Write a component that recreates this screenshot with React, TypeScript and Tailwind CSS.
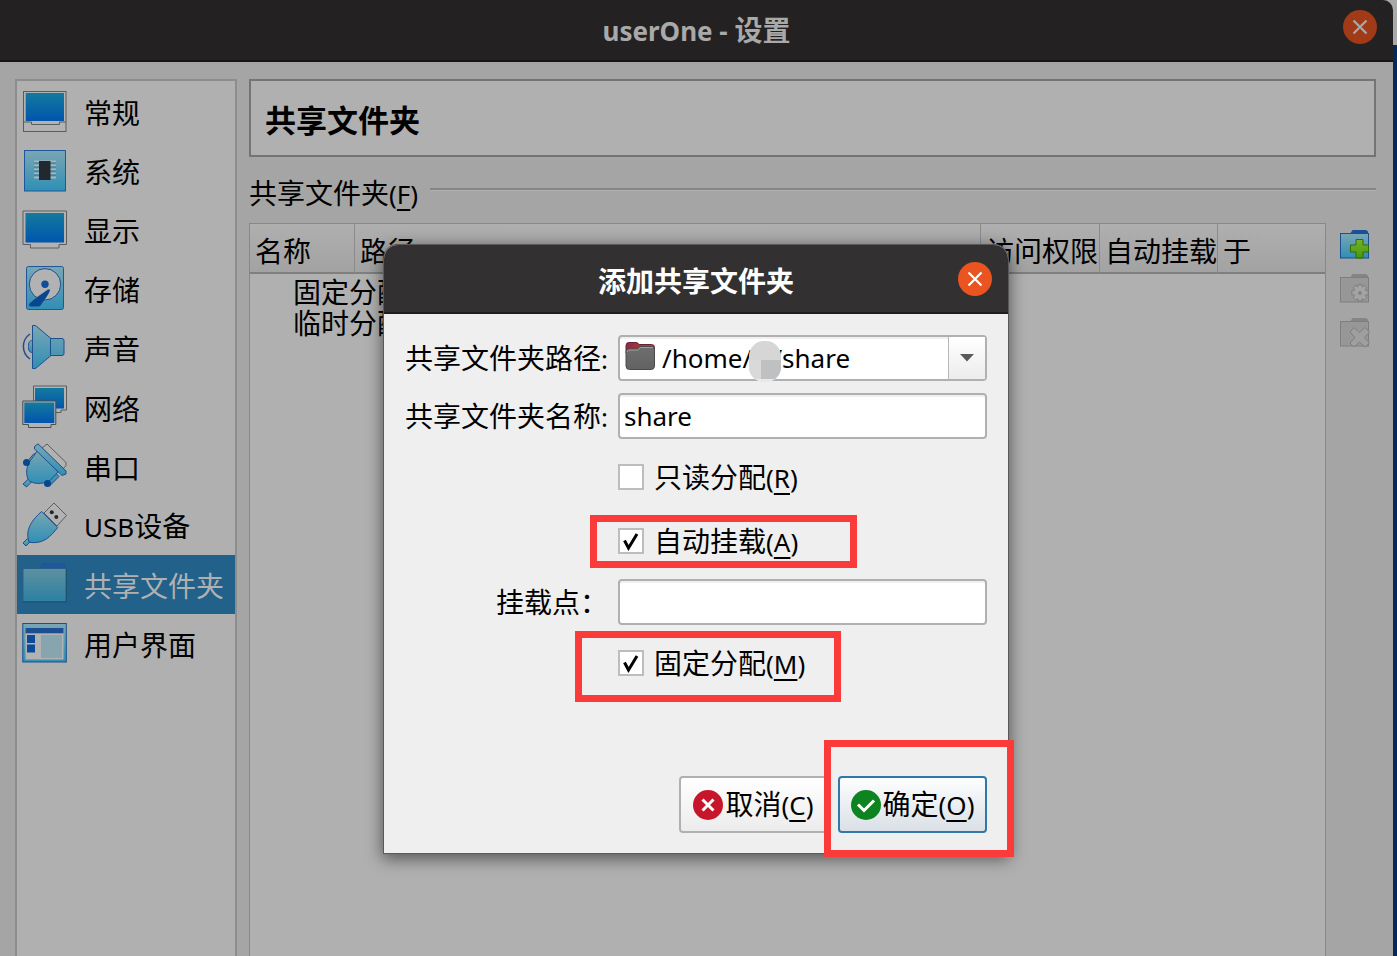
import React from 'react';

const LINE = '#1c4f8e';

function Gradients() {
  return (
    <svg width="0" height="0" className="absolute" aria-hidden="true">
      <defs>
        <linearGradient id="screen" x1="0" y1="0" x2="0" y2="1">
          <stop offset="0" stopColor="#147a9e" />
          <stop offset="1" stopColor="#0055ad" />
        </linearGradient>
        <linearGradient id="sky" x1="0" y1="0" x2="0" y2="1">
          <stop offset="0" stopColor="#7aa6b4" />
          <stop offset="1" stopColor="#2f8fb5" />
        </linearGradient>
        <linearGradient id="folder" x1="0" y1="0" x2="0" y2="1">
          <stop offset="0" stopColor="#5f919f" />
          <stop offset="1" stopColor="#2b80a3" />
        </linearGradient>
        <linearGradient id="plus" x1="0" y1="0" x2="0" y2="1">
          <stop offset="0" stopColor="#7bb02c" />
          <stop offset="1" stopColor="#469808" />
        </linearGradient>
        <linearGradient id="homeTab" x1="0" y1="0" x2="1" y2="0">
          <stop offset="0" stopColor="#8b2a4c" />
          <stop offset="1" stopColor="#c0401f" />
        </linearGradient>
        <linearGradient id="homeBody" x1="0" y1="0" x2="0" y2="1">
          <stop offset="0" stopColor="#6f6f6f" />
          <stop offset="1" stopColor="#626262" />
        </linearGradient>
      </defs>
    </svg>
  );
}

const icons: Record<string, React.ReactNode> = {
  general: (
    <>
      <rect x="1.500" y="3.500" width="42.500" height="40" fill="#b2b2b2" stroke="#5c5c5c" />
      <rect x="3.700" y="5" width="38.300" height="28" fill="url(#screen)" />
      <path d="M2 34h7.500v2.500h28V34H44" fill="none" stroke="#5c5c5c" />
    </>
  ),
  system: (
    <>
      <rect x="2.500" y="3.500" width="41" height="40.500" fill="url(#sky)" stroke="#20579c" />
      <path d="M12 14.500h22M12 18.500h22M12 22.500h22M12 26.500h22M12 30.500h22" stroke="#a9b6ba" strokeWidth="2" />
      <path d="M12 16h22M12 20h22M12 24h22M12 28h22" stroke="#3d7590" strokeWidth="1" />
      <rect x="17" y="14" width="11.500" height="19" fill="#23272e" />
    </>
  ),
  display: (
    <>
      <path d="M1 5h43.500v33.500H37v3.500H8.500v-3.500H1z" fill="#b2b2b2" stroke="#5c5c5c" />
      <rect x="3.500" y="7" width="38.500" height="29.500" fill="url(#screen)" />
    </>
  ),
  storage: (
    <>
      <rect x="4.500" y="1.500" width="37" height="43" rx="2" fill="url(#sky)" stroke="#20579c" />
      <circle cx="23" cy="19.300" r="15.700" fill="#b2b2b2" stroke={LINE} />
      <circle cx="23" cy="19.300" r="3.700" fill="#0f4f98" />
      <path d="M28 24.500c.6 2-5.500 10.500-8.500 14.500-1 2-2 2.600-4 2.600H9c-2 0-2.500-2-1-3.500 5-5 12-9.500 18-13.600z" fill="#0a4590" />
    </>
  ),
  audio: (
    <>
      <path d="M10.500 16.500C7 16.500 6.500 19 6.500 22.500s.5 6 4 6z" fill="url(#sky)" stroke={LINE} />
      <path d="M10.500 1.500h3l15.500 13h11q2 0 2 2v13q0 2-2 2H29l-15.500 13h-3z" fill="url(#sky)" stroke={LINE} strokeLinejoin="round" />
      <path d="M28.500 14.500v17" stroke={LINE} />
      <path d="M8 10C-.8 16-.8 29 8 35" fill="none" stroke={LINE} strokeWidth="1.500" />
    </>
  ),
  network: (
    <>
      <path d="M11.500 2h33v24H39v2.500H22V26H11.500z" fill="#b2b2b2" stroke="#5c5c5c" />
      <rect x="13" y="4" width="29" height="20.500" fill="url(#screen)" />
      <path d="M.8 17h33v23.500H29v3H6.500v-3H.8z" fill="#b2b2b2" stroke="#4c4c4c" />
      <rect x="2.300" y="18.500" width="30" height="20.500" fill="url(#screen)" />
    </>
  ),
  serial: (
    <>
      <path d="M20 5l5-4 19 18.500v3L40 27z" fill="#b2b2b2" stroke="#5c5c5c" />
      <path d="M1 41l6-5.500 3 3L4.500 44z" fill="url(#sky)" stroke={LINE} />
      <path d="M4 20L12 10.500 16 14 7 23.500zM24 39.500L32 28l5 5.500L28.500 42z" fill="url(#sky)" stroke={LINE} />
      <path d="M15.500 7.500L36 29 28 37.500C20 42 10 41 6.500 37c-3-5-2-13 .5-17.500z" fill="url(#sky)" stroke={LINE} />
      <path d="M12.500 3.500L16 .8 44 28v3l-4 1.500L12.500 6z" fill="url(#sky)" stroke={LINE} strokeLinejoin="round" />
      <circle cx="4.500" cy="19.500" r="3.500" fill="#0a4590" />
      <circle cx="25.500" cy="40.500" r="3.500" fill="#0a4590" />
    </>
  ),
  usb: (
    <>
      <path d="M22 11L32 1l12.500 12.500L35 24z" fill="#b2b2b2" stroke="#5c5c5c" />
      <circle cx="29.800" cy="10.300" r="2" fill="#23272e" />
      <circle cx="34.300" cy="15" r="2" fill="#23272e" />
      <path d="M1 41l4.500-4.500 3 3L4 44z" fill="url(#sky)" stroke={LINE} />
      <path d="M19.700 9.500L35.700 25.500C29 34 22 42.500 7 40.300 2.500 27 11 17 19.700 9.500z" fill="url(#sky)" stroke={LINE} />
    </>
  ),
  shared: (
    <>
      <path d="M17 8l3.500-6h20.500l3 2v4z" fill="#20579c" />
      <rect x="1" y="7.500" width="43" height="33" fill="url(#folder)" stroke="#28608c" />
      <path d="M1 41h43.500V8" fill="none" stroke="#1d5170" />
    </>
  ),
  ui: (
    <>
      <rect x=".8" y="3.500" width="43.500" height="38.500" fill="url(#sky)" stroke={LINE} />
      <rect x="3.500" y="8" width="38" height="31.500" fill="#b2b2b2" />
      <rect x="3.500" y="8" width="38" height="5.300" fill="#1c4f92" />
      <rect x="5" y="15" width="8" height="8" fill="#0a4a98" />
      <rect x="5" y="24.500" width="8" height="8" fill="#0a4a98" />
      <rect x="19" y="15" width="21" height="23" fill="#86a5af" />
    </>
  ),
};

const sections: { icon: string; latin?: string; text: string; active?: boolean }[] = [
  { icon: 'general', text: '常规' },
  { icon: 'system', text: '系统' },
  { icon: 'display', text: '显示' },
  { icon: 'storage', text: '存储' },
  { icon: 'audio', text: '声音' },
  { icon: 'network', text: '网络' },
  { icon: 'serial', text: '串口' },
  { icon: 'usb', latin: 'USB', text: '设备' },
  { icon: 'shared', text: '共享文件夹', active: true },
  { icon: 'ui', text: '用户界面' },
];

function Mnemonic({ letter }: { letter: string }) {
  return (
    <span className="text-[26px]">
      (<span className="underline decoration-2 underline-offset-[5px]">{letter}</span>)
    </span>
  );
}

function CloseIcon() {
  return (
    <svg width="34" height="34" viewBox="0 0 34 34" aria-hidden="true">
      <path d="M10.500 10.500l13 13M23.500 10.500l-13 13" stroke="currentColor" strokeWidth="2.200" />
    </svg>
  );
}

function ToolIcon({ kind }: { kind: 'add' | 'edit' | 'remove' }) {
  const on = kind === 'add';
  return (
    <svg width="32" height="32" viewBox="0 0 32 32" aria-hidden="true" className="block">
      <path d="M11 5l2.500-4H27l2 1.500V5z" fill={on ? '#1c4f98' : '#858585'} />
      <rect x="1.500" y="4.500" width="28" height="24.500" fill={on ? 'url(#sky)' : '#979797'} stroke={on ? LINE : '#7e7e7e'} />
      {kind === 'add' && (
        <path d="M17 10.500h7v5.500h5.500v7H24v6h-7v-6h-5.500v-7H17z" fill="url(#plus)" stroke="#2f6d05" />
      )}
      {kind === 'edit' && (
        <g transform="translate(21 20)">
          <path
            d="M-1.800-8.500h3.600l.4 2.500 2-1.800 2.600 2.600-1.600 2.200 3 .8v3.800l-3 .6 1.600 2.400-2.600 2.600-2-1.600-.4 2.400h-3.600l-.4-2.400-2 1.600-2.600-2.600 1.600-2.400-3-.6v-3.800l3-.8-1.600-2.200 2.600-2.600 2 1.800z"
            fill="#a3a3a3"
            stroke="#7e7e7e"
          />
          <circle r="1.800" fill="#7e7e7e" />
        </g>
      )}
      {kind === 'remove' && (
        <path d="M15 10.500l5.500 5 5.500-5 4.500 4.500-5 5.500 5 5.500-4.500 4-5.500-5-5.500 5-4-4 5-5.500-5-5.500z" fill="#9f9f9f" stroke="#7e7e7e" />
      )}
    </svg>
  );
}

function Check({ id, text, letter, checked, children }: { id: string; text: string; letter: string; checked?: boolean; children?: React.ReactNode }) {
  return (
    <div className="relative col-start-2 flex h-[52px] items-center gap-[10px]">
      <span className="relative block size-[26px] shrink-0">
        <input id={id} type="checkbox" defaultChecked={checked} className="peer block size-full appearance-none border-2 border-[#bdbdbd] bg-white" />
        <svg viewBox="0 0 26 26" className="pointer-events-none absolute inset-0 hidden size-full peer-checked:block" aria-hidden="true">
          <path d="M6.500 12.500l4 7.500L19 6" fill="none" stroke="#000" strokeWidth="3" />
        </svg>
      </span>
      <label htmlFor={id} className="whitespace-nowrap">
        {text}
        <Mnemonic letter={letter} />
      </label>
      {children}
    </div>
  );
}

const field =
  'block h-[46px] w-full rounded-[4px] border-2 border-[#b0b0b0] bg-white px-1 text-[26px] outline-none shadow-[inset_0_2px_0_#f0f0f0]';

function AddShareDialog() {
  return (
    <section
      role="dialog"
      aria-labelledby="dialog-title"
      className="relative w-[624px] rounded-t-[14px] bg-[#efefef] shadow-[0_0_0_1px_#5a5a5a,0_4px_16px_2px_rgba(0,0,0,0.5)]"
    >
      <header className="grid h-[69px] grid-cols-[1fr_auto_1fr] items-center rounded-t-[14px] border-b-2 border-[#1f1d1e] bg-[#333031] px-4 text-white">
        <h2 id="dialog-title" className="col-start-2 pt-[5px] font-bold">添加共享文件夹</h2>
        <button type="button" aria-label="关闭" className="justify-self-end rounded-full bg-[#e95420]">
          <CloseIcon />
        </button>
      </header>
      <form className="px-[21px] pt-[21px] pb-5" onSubmit={(e) => e.preventDefault()}>
        <div className="grid grid-cols-[auto_1fr] items-center gap-x-[10px] gap-y-3">
          <label htmlFor="path" className="text-right whitespace-nowrap">
            共享文件夹路径<span className="text-[26px]">:</span>
          </label>
          <div className="relative">
            <select id="path" className="block h-[46px] w-full appearance-none rounded-[4px] border-2 border-[#b0b0b0] bg-white pl-[42px] text-[26px] outline-none shadow-[inset_0_2px_0_#f0f0f0]">
              <option>{'/home/\u00a0\u00a0\u00a0/share'}</option>
            </select>
            <svg width="32" height="32" viewBox="0 0 32 32" className="pointer-events-none absolute top-[6px] left-[6px]" aria-hidden="true">
              <path d="M2 12V4.500Q2 1.500 5 1.500h7q2 0 3 2h12.500q3 0 3 3V12z" fill="url(#homeTab)" stroke="#6b2033" />
              <path d="M2 11q0-3 3-3h8l3-2.500h11.500q3 0 3 3V25q0 3.500-3.500 3.500H5.500Q2 28.500 2 25z" fill="url(#homeBody)" stroke="#4a4a4a" />
              <path d="M3 11q0-2 2-2h8.500l3-2.500H29" fill="none" stroke="#a0a0a0" />
            </svg>
            <svg width="32" height="41" viewBox="0 0 32 41" className="pointer-events-none absolute top-[6px] left-[131px]" aria-hidden="true">
              <clipPath id="smudge">
                <rect width="32" height="41" rx="15" />
              </clipPath>
              <g clipPath="url(#smudge)">
                <rect width="32" height="41" fill="#d5d6d5" />
                <rect y="19" width="12" height="20" fill="#d9d9d9" />
                <rect x="12" y="19" width="20" height="20" fill="#bfc0c2" />
                <rect y="38" width="32" height="3" fill="#e9e9ea" />
              </g>
            </svg>
            <span className="pointer-events-none absolute inset-y-[2px] right-[2px] flex w-[37px] items-center justify-center border-l border-[#b8b8b8] bg-linear-to-b from-white to-[#ececec]">
              <svg width="14" height="8" viewBox="0 0 14 8" aria-hidden="true">
                <path d="M0 0h14L7 7.500z" fill="#5a5a5a" />
              </svg>
            </span>
          </div>

          <label htmlFor="name" className="text-right whitespace-nowrap">
            共享文件夹名称<span className="text-[26px]">:</span>
          </label>
          <input id="name" type="text" defaultValue="share" className={field} />

          <Check id="readonly" text="只读分配" letter="R" />
          <Check id="automount" text="自动挂载" letter="A" checked>
            <span className="pointer-events-none absolute top-0 -bottom-px -left-7 w-[267px] border-[7px] border-[#fb3a3a]" />
          </Check>

          <label htmlFor="mount" className="text-right whitespace-nowrap">挂载点：</label>
          <input id="mount" type="text" className={field} />

          <Check id="permanent" text="固定分配" letter="M" checked>
            <span className="pointer-events-none absolute -top-1.5 -bottom-[13px] -left-[43px] w-[266px] border-[7px] border-[#fb3a3a]" />
          </Check>
        </div>

        <div className="mt-[87px] flex justify-end gap-[10px]">
          <button type="button" className="flex h-[57px] w-[149px] items-center justify-center gap-[2px] rounded-[4px] border-2 border-[#b0b0b0] bg-linear-to-b from-white to-[#ececec] whitespace-nowrap">
            <svg width="30" height="30" viewBox="0 0 30 30" className="shrink-0" aria-hidden="true">
              <circle cx="15" cy="15" r="15" fill="#c7162b" />
              <path d="M9.500 9.500l11 11M20.500 9.500l-11 11" stroke="#fff" strokeWidth="3" />
            </svg>
            <span>取消<Mnemonic letter="C" /></span>
          </button>
          <div className="relative">
            <button type="submit" className="flex h-[57px] w-[149px] items-center justify-center gap-[2px] rounded-[4px] border-2 border-[#3078a8] bg-linear-to-b from-[#fdfeff] to-[#d9e0e6] whitespace-nowrap">
              <svg width="30" height="30" viewBox="0 0 30 30" className="shrink-0" aria-hidden="true">
                <circle cx="15" cy="15" r="15" fill="#0e8420" />
                <path d="M7 14.500l6 6L23 10.500" fill="none" stroke="#fff" strokeWidth="3" />
              </svg>
              <span>确定<Mnemonic letter="O" /></span>
            </button>
            <span className="pointer-events-none absolute -top-9 -right-[27px] -bottom-6 w-[190px] border-[7px] border-[#fb3a3a]" />
          </div>
        </div>
      </form>
    </section>
  );
}

const th = 'h-[50px] border-r border-b-2 border-[#7f7f7f] border-r-[#8b8b8b] pt-[6px] pl-[5px] text-left font-normal whitespace-nowrap';

export default function App() {
  return (
    <div className="relative flex h-screen overflow-hidden bg-linear-to-b from-[#a9a9a9] from-[45px] to-[#032a57] to-[45px] font-['Noto_Sans','Noto_Sans_CJK_SC',sans-serif] text-[28px] leading-[32px] text-black">
      <Gradients />
      <div className="mr-1 flex min-w-0 flex-1 flex-col rounded-tr-[10px] bg-[#a5a5a5]">
        <header className="grid h-[62px] shrink-0 grid-cols-[1fr_auto_1fr] items-center rounded-tr-[10px] border-b-2 border-[#161515] bg-[#232122] px-4 text-[#a9a9a9]">
          <h1 className="col-start-2 font-bold">
            <span className="text-[26px]">userOne - </span>设置
          </h1>
          <button type="button" aria-label="关闭" className="mt-[10px] self-start justify-self-end rounded-full bg-[#a13a16]">
            <CloseIcon />
          </button>
        </header>

        <div className="flex min-h-0 flex-1 gap-3 pt-[17px] pr-[17px] pl-[15px]">
          <nav className="w-[222px] shrink-0 border-2 border-b-0 border-[#8d8d8d] bg-[#b0b0b0]">
            <ul className="grid h-[592px] auto-rows-fr">
              {sections.map((s) => (
                <li key={s.icon}>
                  <a
                    href="#"
                    className={
                      s.active
                        ? 'flex h-full items-center gap-4 bg-[#21618a] pl-[5px] whitespace-nowrap text-[#b0b0b0]'
                        : 'flex h-full items-center gap-4 pl-[5px] whitespace-nowrap'
                    }
                  >
                    <svg width="46" height="46" viewBox="0 0 46 46" className="shrink-0" aria-hidden="true">
                      {icons[s.icon]}
                    </svg>
                    <span className="pt-1">
                      {s.latin && <span className="text-[26px]">{s.latin}</span>}
                      {s.text}
                    </span>
                  </a>
                </li>
              ))}
            </ul>
          </nav>

          <main className="flex min-w-0 flex-1 flex-col">
            <h2 className="flex h-[78px] shrink-0 items-center border-2 border-[#747474] bg-[#b0b0b0] pt-1 pl-[14px] text-[31px] font-bold">
              共享文件夹
            </h2>
            <div className="mt-5 flex h-8 shrink-0 items-center gap-3">
              <h3 className="whitespace-nowrap">
                共享文件夹<Mnemonic letter="F" />
              </h3>
              <span className="mb-2 h-[3px] flex-1 border-t-2 border-b border-t-[#858585] border-b-[#b0b0b0]" />
            </div>
            <div className="mt-[14px] flex min-h-0 flex-1 gap-[13px]">
              <div className="min-w-0 flex-1 border border-b-0 border-[#888] bg-[#b0b0b0]">
                <table className="w-full table-fixed border-separate border-spacing-0">
                  <thead className="bg-linear-to-b from-[#afafaf] to-[#a2a2a2]">
                    <tr>
                      <th className={`${th} w-[105px]`}>名称</th>
                      <th className={th}>路径</th>
                      <th className={`${th} w-[119px]`}>访问权限</th>
                      <th className={`${th} w-[118px]`}>自动挂载</th>
                      <th className={`${th} w-[107px] border-r-0`}>于</th>
                    </tr>
                  </thead>
                  <tbody>
                    <tr>
                      <td colSpan={5} className="pt-[3px] pl-[43px] leading-[31px]">固定分配</td>
                    </tr>
                    <tr>
                      <td colSpan={5} className="pl-[43px] leading-[31px]">临时分配</td>
                    </tr>
                  </tbody>
                </table>
              </div>
              <div className="flex w-[37px] shrink-0 flex-col gap-3 pt-[6px]">
                <button type="button" aria-label="添加共享文件夹"><ToolIcon kind="add" /></button>
                <button type="button" aria-label="编辑共享文件夹" disabled><ToolIcon kind="edit" /></button>
                <button type="button" aria-label="删除共享文件夹" disabled><ToolIcon kind="remove" /></button>
              </div>
            </div>
          </main>
        </div>
      </div>

      <div className="absolute inset-y-0 right-[5px] left-0 flex items-start justify-center pt-[245px]">
        <AddShareDialog />
      </div>
    </div>
  );
}
